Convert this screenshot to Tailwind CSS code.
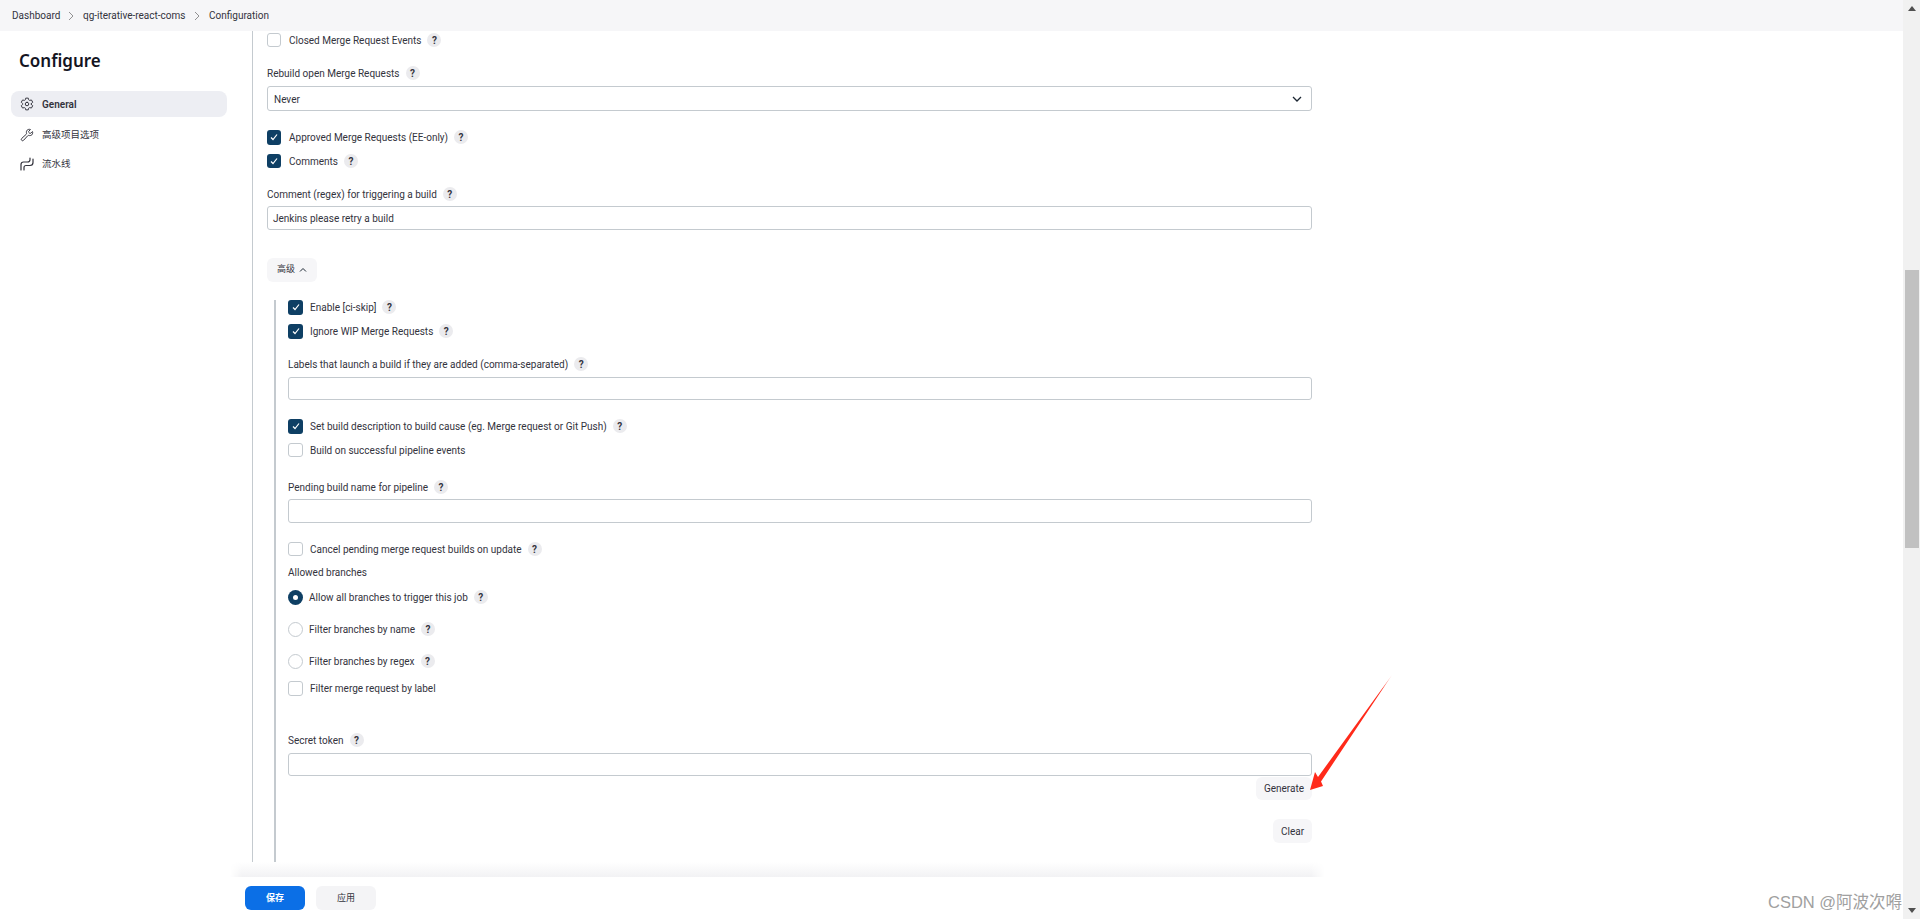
<!DOCTYPE html>
<html lang="en">
<head>
    <meta charset="UTF-8">
    <title>Configuration</title>
    <script src="https://cdn.jsdelivr.net/npm/@tailwindcss/browser@4"></script>
</head>
<body class="h-screen overflow-hidden bg-white text-[10px] text-[#33333d] font-['Roboto','Noto_Sans_CJK_SC',sans-serif]">
    <div class="relative flex h-[919px]">
        <div class="flex flex-col flex-1 min-w-0">
            <!-- Breadcrumb -->
            <nav class="flex items-center h-[31px] shrink-0 pl-[12px] bg-[#f6f6f8]">
                <span class="w-[47px] whitespace-nowrap">Dashboard</span>
                <svg class="w-[8px] h-[10px] mx-[8px] text-[#777]" viewBox="0 0 8 10" fill="none" stroke="currentColor" stroke-width="0.8"><path d="M2 1l4 4-4 4"/></svg>
                <span class="w-[102px] whitespace-nowrap">qg-iterative-react-coms</span>
                <svg class="w-[8px] h-[10px] mx-[8px] text-[#777]" viewBox="0 0 8 10" fill="none" stroke="currentColor" stroke-width="0.8"><path d="M2 1l4 4-4 4"/></svg>
                <span class="whitespace-nowrap">Configuration</span>
            </nav>

            <div class="flex h-[831px] shrink-0 overflow-hidden">
                <!-- Sidebar -->
                <aside class="w-[252px] shrink-0 pl-[11px]">
                    <h1 class="ml-[8px] mt-[18px] text-[17px] leading-[24px] font-semibold text-[#14141f] font-['Noto_Sans',sans-serif]">Configure</h1>
                    <a class="flex items-center h-[26px] w-[216px] mt-[18px] pl-[9px] gap-[8px] rounded-[8px] bg-[#edeef3] font-semibold">
                        <svg class="w-[14px] h-[14px]" viewBox="0 0 512 512" fill="none" stroke="currentColor" stroke-width="36" stroke-linecap="round" stroke-linejoin="round"><path d="M262.29 192.31a64 64 0 1057.4 57.4 64.13 64.13 0 00-57.4-57.4zM416.39 256a154.34 154.34 0 01-1.53 20.79l45.21 35.46a10.81 10.81 0 012.45 13.75l-42.77 74a10.81 10.81 0 01-13.14 4.59l-44.9-18.08a16.11 16.11 0 00-15.17 1.75A164.48 164.48 0 01325 400.8a15.94 15.94 0 00-8.82 12.14l-6.73 47.89a11.08 11.08 0 01-10.68 9.17h-85.54a11.11 11.11 0 01-10.69-8.87l-6.72-47.82a16.07 16.07 0 00-9-12.22 155.3 155.3 0 01-21.46-12.57 16 16 0 00-15.11-1.71l-44.89 18.07a10.81 10.81 0 01-13.14-4.58l-42.77-74a10.8 10.8 0 012.45-13.75l38.21-30a16.05 16.05 0 006-14.08c-.36-4.17-.58-8.33-.58-12.5s.21-8.27.58-12.35a16 16 0 00-6.07-13.94l-38.19-30A10.81 10.81 0 0149.48 186l42.77-74a10.81 10.81 0 0113.14-4.59l44.9 18.08a16.11 16.11 0 0015.17-1.75A164.48 164.48 0 01187 111.2a15.94 15.94 0 008.82-12.14l6.73-47.89A11.08 11.08 0 01213.23 42h85.54a11.11 11.11 0 0110.69 8.87l6.72 47.82a16.07 16.07 0 009 12.22 155.3 155.3 0 0121.46 12.57 16 16 0 0015.11 1.71l44.89-18.07a10.81 10.81 0 0113.14 4.58l42.77 74a10.8 10.8 0 01-2.45 13.75l-38.21 30a16.05 16.05 0 00-6.05 14.08c.33 4.14.55 8.3.55 12.47z"/></svg>
                        <span class="pt-px">General</span>
                    </a>
                    <a class="flex items-center h-[26px] mt-[5px] pl-[9px] gap-[8px] text-[9.5px]">
                        <svg class="w-[14px] h-[14px]" viewBox="0 0 512 512" fill="none" stroke="currentColor" stroke-width="36" stroke-linecap="round" stroke-linejoin="round"><path d="M393.87 190a32.1 32.1 0 01-45.25 0l-26.57-26.57a32.09 32.09 0 010-45.26L382.19 58a1 1 0 00-.3-1.64c-38.82-16.64-89.15-8.16-121.11 23.57-30.58 30.35-32.32 76-21.12 115.84a31.93 31.93 0 01-9.06 32.08L64 380a48.17 48.17 0 1068 68l153.86-167a31.93 31.93 0 0131.6-9.13c39.54 10.59 84.54 8.6 114.72-21.19 32.49-32 39.5-88.56 23.75-120.93a1 1 0 00-1.6-.26z"/></svg>
                        高级项目选项
                    </a>
                    <a class="flex items-center h-[26px] mt-[3px] pl-[9px] gap-[8px] text-[9.5px]">
                        <svg class="w-[14px] h-[14px]" viewBox="0 0 14 14" fill="none" stroke="currentColor" stroke-width="1.2" stroke-linecap="round"><path d="M1 13V7.500C1 6 2 5 3.500 5H7.500C9 5 10 4.200 10 2.800V1"/><path d="M4 13V10.500C4 9.500 4.800 8.500 6 8.500H10C11.800 8.500 13 7.500 13 5.500V2"/></svg>
                        流水线
                    </a>
                </aside>

                <!-- Form -->
                <main class="w-[1060px] shrink-0 border-l border-[#c4cacf] pl-[14px] flex flex-col">
                    <div class="flex items-center h-[18px] gap-[8px]">
                        <span class="w-[14px] h-[14px] rounded-[3px] border border-[#c4cacf]"></span>
                        <span class="pt-px">Closed Merge Request Events</span>
                        <span class="flex items-center justify-center w-[14px] h-[14px] ml-[-2px] rounded-full bg-[#ebebee] text-[10px] font-bold">?</span>
                    </div>

                    <div class="flex items-center h-[16px] mt-[16px] gap-[6px]">
                        <span class="pt-px">Rebuild open Merge Requests</span>
                        <span class="flex items-center justify-center w-[14px] h-[14px] rounded-full bg-[#ebebee] text-[10px] font-bold">?</span>
                    </div>
                    <div class="flex items-center justify-between h-[25px] mt-[5px] px-[6px] rounded-[3px] border border-[#c4cacf]">
                        <span class="pt-px">Never</span>
                        <svg class="w-[12px] h-[12px] mr-[2px]" viewBox="0 0 12 12" fill="none" stroke="#1c2733" stroke-width="1.3"><path d="M2 4l4 4 4-4"/></svg>
                    </div>

                    <div class="flex items-center h-[16px] mt-[18px] gap-[8px]">
                        <span class="flex items-center justify-center w-[14px] h-[15px] rounded-[3px] bg-[#0e3f64]">
                            <svg class="w-[10px] h-[10px]" viewBox="0 0 10 10" fill="none" stroke="white" stroke-width="1.2"><path d="M2 5.500l2 2 4-5"/></svg>
                        </span>
                        <span class="pt-px">Approved Merge Requests (EE-only)</span>
                        <span class="flex items-center justify-center w-[14px] h-[14px] ml-[-2px] rounded-full bg-[#ebebee] text-[10px] font-bold">?</span>
                    </div>
                    <div class="flex items-center h-[16px] mt-[8px] gap-[8px]">
                        <span class="flex items-center justify-center w-[14px] h-[14px] rounded-[3px] bg-[#0e3f64]">
                            <svg class="w-[10px] h-[10px]" viewBox="0 0 10 10" fill="none" stroke="white" stroke-width="1.2"><path d="M2 5.500l2 2 4-5"/></svg>
                        </span>
                        <span class="pt-px">Comments</span>
                        <span class="flex items-center justify-center w-[14px] h-[14px] ml-[-2px] rounded-full bg-[#ebebee] text-[10px] font-bold">?</span>
                    </div>

                    <div class="flex items-center h-[16px] mt-[17px] gap-[6px]">
                        <span class="pt-px">Comment (regex) for triggering a build</span>
                        <span class="flex items-center justify-center w-[14px] h-[14px] rounded-full bg-[#ebebee] text-[10px] font-bold">?</span>
                    </div>
                    <div class="flex items-center h-[24px] mt-[4px] px-[5px] pt-px rounded-[3px] border border-[#c4cacf]">Jenkins please retry a build</div>

                    <button class="flex items-center justify-center self-start w-[50px] h-[24px] mt-[28px] gap-[4px] rounded-[6px] bg-[#f6f6f8] text-[9px]">
                        高级
                        <svg class="w-[8px] h-[8px]" viewBox="0 0 8 8" fill="none" stroke="#1c2733" stroke-width="1"><path d="M1 5.500l3-3 3 3"/></svg>
                    </button>

                    <!-- Advanced block -->
                    <div class="flex flex-col flex-1 mt-[18px] ml-[7px] pl-[12px] border-l-2 border-[#c4cacf]">
                        <div class="flex items-center h-[14px] gap-[7px]">
                            <span class="flex items-center justify-center w-[15px] h-[15px] rounded-[3px] bg-[#0e3f64]">
                                <svg class="w-[10px] h-[10px]" viewBox="0 0 10 10" fill="none" stroke="white" stroke-width="1.2"><path d="M2 5.500l2 2 4-5"/></svg>
                            </span>
                            <span class="pt-px">Enable [ci-skip]</span>
                            <span class="flex items-center justify-center w-[14px] h-[14px] ml-[-1px] rounded-full bg-[#ebebee] text-[10px] font-bold">?</span>
                        </div>
                        <div class="flex items-center h-[16px] mt-[9px] gap-[7px]">
                            <span class="flex items-center justify-center w-[15px] h-[15px] rounded-[3px] bg-[#0e3f64]">
                                <svg class="w-[10px] h-[10px]" viewBox="0 0 10 10" fill="none" stroke="white" stroke-width="1.2"><path d="M2 5.500l2 2 4-5"/></svg>
                            </span>
                            <span class="pt-px">Ignore WIP Merge Requests</span>
                            <span class="flex items-center justify-center w-[14px] h-[14px] ml-[-1px] rounded-full bg-[#ebebee] text-[10px] font-bold">?</span>
                        </div>

                        <div class="flex items-center h-[16px] mt-[17px] gap-[6px]">
                            <span class="pt-px">Labels that launch a build if they are added (comma-separated)</span>
                            <span class="flex items-center justify-center w-[14px] h-[14px] rounded-full bg-[#ebebee] text-[10px] font-bold">?</span>
                        </div>
                        <div class="h-[23px] mt-[5px] rounded-[3px] border border-[#c4cacf]"></div>

                        <div class="flex items-center h-[16px] mt-[18px] gap-[7px]">
                            <span class="flex items-center justify-center w-[15px] h-[15px] rounded-[3px] bg-[#0e3f64]">
                                <svg class="w-[10px] h-[10px]" viewBox="0 0 10 10" fill="none" stroke="white" stroke-width="1.2"><path d="M2 5.500l2 2 4-5"/></svg>
                            </span>
                            <span class="pt-px">Set build description to build cause (eg. Merge request or Git Push)</span>
                            <span class="flex items-center justify-center w-[14px] h-[14px] ml-[-1px] rounded-full bg-[#ebebee] text-[10px] font-bold">?</span>
                        </div>
                        <div class="flex items-center h-[16px] mt-[8px] gap-[7px]">
                            <span class="w-[15px] h-[14px] rounded-[3px] border border-[#c4cacf]"></span>
                            <span class="pt-px">Build on successful pipeline events</span>
                        </div>

                        <div class="flex items-center h-[16px] mt-[21px] gap-[6px]">
                            <span class="pt-px">Pending build name for pipeline</span>
                            <span class="flex items-center justify-center w-[14px] h-[14px] rounded-full bg-[#ebebee] text-[10px] font-bold">?</span>
                        </div>
                        <div class="h-[24px] mt-[4px] rounded-[3px] border border-[#c4cacf]"></div>

                        <div class="flex items-center h-[16px] mt-[18px] gap-[7px]">
                            <span class="w-[15px] h-[14px] rounded-[3px] border border-[#c4cacf]"></span>
                            <span class="pt-px">Cancel pending merge request builds on update</span>
                            <span class="flex items-center justify-center w-[14px] h-[14px] ml-[-1px] rounded-full bg-[#ebebee] text-[10px] font-bold">?</span>
                        </div>
                        <div class="flex items-center h-[16px] mt-[7px] pt-px">Allowed branches</div>

                        <div class="flex items-center h-[16px] mt-[9px] gap-[6px]">
                            <span class="flex items-center justify-center w-[15px] h-[15px] rounded-full bg-[#0e3f64]">
                                <span class="w-[5px] h-[5px] rounded-full bg-white"></span>
                            </span>
                            <span class="pt-px">Allow all branches to trigger this job</span>
                            <span class="flex items-center justify-center w-[14px] h-[14px] rounded-full bg-[#ebebee] text-[10px] font-bold">?</span>
                        </div>
                        <div class="flex items-center h-[16px] mt-[16px] gap-[6px]">
                            <span class="w-[15px] h-[15px] rounded-full border border-[#c4cacf]"></span>
                            <span class="pt-px">Filter branches by name</span>
                            <span class="flex items-center justify-center w-[14px] h-[14px] rounded-full bg-[#ebebee] text-[10px] font-bold">?</span>
                        </div>
                        <div class="flex items-center h-[16px] mt-[16px] gap-[6px]">
                            <span class="w-[15px] h-[15px] rounded-full border border-[#c4cacf]"></span>
                            <span class="pt-px">Filter branches by regex</span>
                            <span class="flex items-center justify-center w-[14px] h-[14px] rounded-full bg-[#ebebee] text-[10px] font-bold">?</span>
                        </div>
                        <div class="flex items-center h-[16px] mt-[11px] gap-[7px]">
                            <span class="w-[15px] h-[15px] rounded-[3px] border border-[#c4cacf]"></span>
                            <span class="pt-px">Filter merge request by label</span>
                        </div>

                        <div class="flex items-center h-[16px] mt-[36px] gap-[6px]">
                            <span class="pt-px">Secret token</span>
                            <span class="flex items-center justify-center w-[14px] h-[14px] rounded-full bg-[#ebebee] text-[10px] font-bold">?</span>
                        </div>
                        <div class="h-[23px] mt-[5px] rounded-[3px] border border-[#c4cacf]"></div>
                        <button class="self-end w-[56px] h-[23px] mt-[1px] rounded-[6px] bg-[#f6f6f8]">Generate</button>
                        <button class="self-end w-[39px] h-[24px] mt-[19px] rounded-[6px] bg-[#f6f6f8]">Clear</button>
                    </div>
                </main>
            </div>

            <!-- Bottom bar -->
            <div class="h-[15px] w-[1095px] ml-[230px] shrink-0 bg-gradient-to-b from-white to-[#f2f2f4] [mask-image:linear-gradient(to_right,transparent,black_12px,black_calc(100%-14px),transparent)]"></div>
            <footer class="flex flex-1 gap-[11px] pt-[9px] pl-[245px] text-[9px]">
                <button class="w-[60px] h-[24px] pt-px rounded-[6px] bg-[#0b6fe6] text-white font-semibold">保存</button>
                <button class="w-[60px] h-[24px] pt-px rounded-[6px] bg-[#f4f4f6]">应用</button>
            </footer>
        </div>

        <!-- Scrollbar -->
        <div class="relative flex flex-col items-center justify-between w-[17px] shrink-0 py-[6px] bg-[#f1f1f1]">
            <span class="w-0 h-0 border-x-[4px] border-x-transparent border-b-[5px] border-b-[#505050]"></span>
            <span class="absolute left-[2px] top-[270px] w-[14px] h-[278px] bg-[#c1c1c1]"></span>
            <span class="w-0 h-0 border-x-[4px] border-x-transparent border-t-[5px] border-t-[#505050]"></span>
        </div>

        <!-- Annotation arrow -->
        <svg class="absolute left-[1300px] top-[670px] w-[100px] h-[130px]" viewBox="0 0 100 130">
            <defs>
                <linearGradient id="tail" x1="92" y1="5" x2="10" y2="120" gradientUnits="userSpaceOnUse">
                    <stop offset="0" stop-color="#ff2a1a" stop-opacity="0.3"/>
                    <stop offset="0.12" stop-color="#ff2a1a"/>
                </linearGradient>
            </defs>
            <path d="M92 5L18 107L15 102L10 120L23 116L21 111.500Z" fill="url(#tail)"/>
        </svg>

        <!-- Watermark -->
        <div class="absolute left-[1768px] top-[892px] text-[16.5px] leading-[20px] whitespace-nowrap text-[#a0a0a0] font-['Liberation_Sans','Noto_Sans_CJK_SC',sans-serif]">CSDN @阿波次嘚</div>
    </div>
</body>
</html>
